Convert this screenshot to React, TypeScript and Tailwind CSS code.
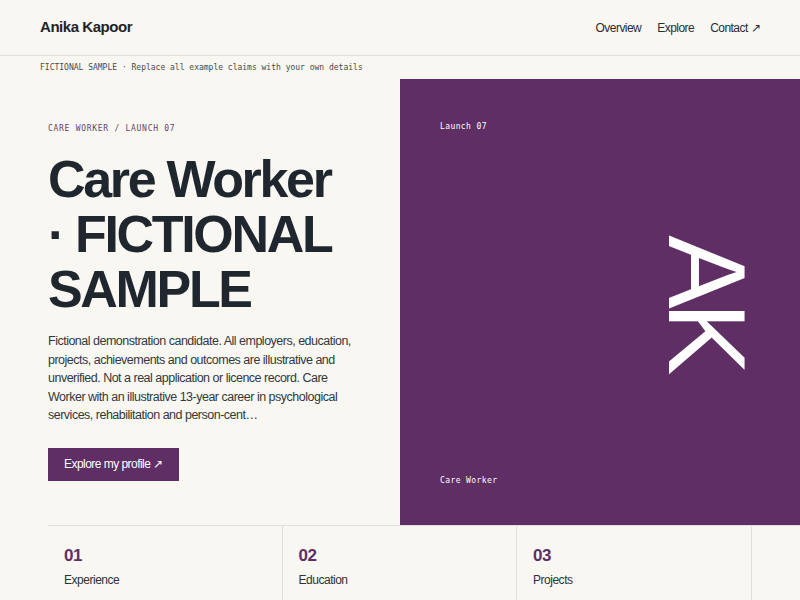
import React from 'react';

const sans = { fontFamily: '"Liberation Sans", Arial, sans-serif' };

const stats = [
  { num: '01', label: 'Experience' },
  { num: '02', label: 'Education' },
  { num: '03', label: 'Projects' },
];

export default function App() {
  return (
    <div className="min-h-[600px] w-[800px] overflow-hidden bg-[#f8f7f2] text-[#1f262d] font-['Liberation_Sans',Arial,sans-serif]">
      {/* Header */}
      <header className="flex h-[56px] items-center justify-between border-b border-[#e2e0db] px-10">
        <div className="text-[15px] font-bold tracking-[-0.03em] text-[#1f2328]">Anika Kapoor</div>
        <nav className="flex items-center gap-4 text-[12px] tracking-[-0.045em] text-[#2a2d31]">
          <a>Overview</a>
          <a>Explore</a>
          <a>Contact ↗</a>
        </nav>
      </header>

      {/* Notice strip */}
      <div className="flex h-[23px] items-center px-10 font-['DejaVu_Sans_Mono',monospace] text-[8px] text-[#4a4a4a]">
        FICTIONAL SAMPLE · Replace all example claims with your own details
      </div>

      {/* Hero */}
      <section className="grid h-[446px] grid-cols-2">
        <div className="flex flex-col justify-center pl-12 pr-9">
          <div className="font-['DejaVu_Sans_Mono',monospace] text-[8px] tracking-[0.09em] text-[#6a3f70]">
            CARE WORKER / LAUNCH 07
          </div>
          <h1 className="mt-[17px] max-w-[300px] text-[52px] font-bold leading-[55px] tracking-[-0.045em] text-[#1f262d]">
            Care Worker · FICTIONAL SAMPLE
          </h1>
          <p className="mt-[15px] text-[12.5px] leading-[18.6px] tracking-[-0.04em] text-[#34373b]">
            Fictional demonstration candidate. All employers, education, projects, achievements and outcomes are
            illustrative and unverified. Not a real application or licence record. Care Worker with an illustrative
            13-year career in psychological services, rehabilitation and person-cent…
          </p>
          <div className="mt-[23px]">
            <button className="h-[33px] bg-[#5e2e64] px-4 text-[12px] tracking-[-0.045em] text-white" style={sans}>
              Explore my profile ↗
            </button>
          </div>
        </div>

        <div className="relative flex flex-col justify-between bg-[#5e2e64] px-10 pt-[42px] pb-[38px] font-['DejaVu_Sans_Mono',monospace] text-[8px] tracking-[0.05em] text-white">
          <div>Launch 07</div>
          <div>Care Worker</div>
          <div className="absolute right-[53px] top-1/2 -translate-y-1/2 font-['Liberation_Sans',Arial,sans-serif] text-[110px] leading-[80px] tracking-[-0.06em] [writing-mode:vertical-rl]">
            AK
          </div>
        </div>
      </section>

      {/* Stats */}
      <section className="ml-12 flex border-t border-[#e2e0db]">
        {stats.map((s) => (
          <div key={s.num} className="w-[234.5px] shrink-0 border-r border-[#e2e0db] px-4 pt-[21px] pb-6">
            <div className="text-[17px] font-bold leading-none tracking-[-0.03em] text-[#5e2e64]">{s.num}</div>
            <div className="mt-[7px] text-[12px] tracking-[-0.04em] text-[#2f3236]">{s.label}</div>
          </div>
        ))}
      </section>
    </div>
  );
}
